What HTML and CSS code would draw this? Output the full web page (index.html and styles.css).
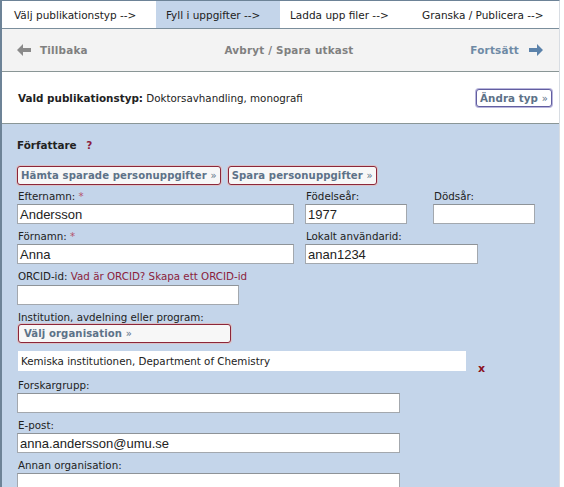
FILE: index.html
```html
<!DOCTYPE html>
<html lang="sv">
<head>
<meta charset="utf-8">
<title>Fyll i uppgifter</title>
<link rel="stylesheet" href="styles.css">
</head>
<body>
<div class="page">
  <div class="tabs">
    <div class="tab t1">Välj publikationstyp --&gt;</div>
    <div class="tab t2 active">Fyll i uppgifter --&gt;</div>
    <div class="tab t3">Ladda upp filer --&gt;</div>
    <div class="tab t4">Granska / Publicera --&gt;</div>
  </div>
  <div class="navbar">
    <div class="nav-back">
      <svg class="arrow" width="14" height="12" viewBox="0 0 14 12"><path d="M0 6 L6 0 L6 4 L14 4 L14 8 L6 8 L6 12 Z" fill="#8a8a8a"/></svg>
      <span>Tillbaka</span>
    </div>
    <div class="nav-mid">Avbryt / Spara utkast</div>
    <div class="nav-next">
      <span>Fortsätt</span>
      <svg class="arrow" width="14" height="12" viewBox="0 0 14 12"><path d="M14 6 L8 0 L8 4 L0 4 L0 8 L8 8 L8 12 Z" fill="#5b82aa"/></svg>
    </div>
  </div>
  <div class="typebar">
    <div class="typetext"><b>Vald publikationstyp:</b> Doktorsavhandling, monografi</div>
    <button class="btn btn-type">Ändra typ <span class="raq">»</span></button>
  </div>
  <div class="panel">
    <div class="heading">Författare <span class="help">?</span></div>
    <div class="btnrow">
      <button class="btn btn-red">Hämta sparade personuppgifter <span class="raq">»</span></button>
      <button class="btn btn-red">Spara personuppgifter <span class="raq">»</span></button>
    </div>
    <div class="row">
      <div class="field">
        <label>Efternamn: <span class="req">*</span></label>
        <div class="input w-name">Andersson</div>
      </div>
      <div class="field">
        <label>Födelseår:</label>
        <div class="input w-year">1977</div>
      </div>
      <div class="field f-death">
        <label>Dödsår:</label>
        <div class="input w-year"></div>
      </div>
    </div>
    <div class="row">
      <div class="field">
        <label>Förnamn: <span class="req">*</span></label>
        <div class="input w-name">Anna</div>
      </div>
      <div class="field">
        <label>Lokalt användarid:</label>
        <div class="input w-uid">anan1234</div>
      </div>
    </div>
    <div class="field">
      <label>ORCID-id: <a class="link">Vad är ORCID?</a> <a class="link">Skapa ett ORCID-id</a></label>
      <div class="input w-orcid"></div>
    </div>
    <div class="field">
      <label>Institution, avdelning eller program:</label>
      <button class="btn btn-red btn-org">Välj organisation <span class="raq">»</span></button>
    </div>
    <div class="orgrow">
      <div class="orgbox">Kemiska institutionen, Department of Chemistry</div>
      <span class="remove">x</span>
    </div>
    <div class="field">
      <label>Forskargrupp:</label>
      <div class="input w-wide"></div>
    </div>
    <div class="field">
      <label>E-post:</label>
      <div class="input w-wide">anna.andersson@umu.se</div>
    </div>
    <div class="field">
      <label>Annan organisation:</label>
      <div class="input w-wide"></div>
    </div>
  </div>
</div>
</body>
</html>
```

FILE: styles.css
```css
html, body {
  margin: 0;
  padding: 0;
  background: #ffffff;
}
body {
  font-family: "DejaVu Sans", Verdana, sans-serif;
  font-size: 10.3px;
  color: #222;
}
.page {
  width: 557px;
  border-left: 2px solid #6d8397;
  border-right: 1px solid #d8dde3;
  border-top: 1px solid #6d8397;
  box-sizing: content-box;
}
.tabs {
  display: flex;
  height: 27px;
  border-bottom: 1px solid #7b8e9c;
  font-size: 10.5px;
}
.tab {
  display: flex;
  align-items: center;
  padding-left: 12px;
  box-sizing: border-box;
  color: #222;
}
.t1 { width: 154px; }
.t2 { width: 124px; padding-left: 10px; }
.t3 { width: 128px; padding-left: 10px; }
.t4 { flex: 1; padding-left: 14px; }
.tab.active { background: #c4d5ea; }
.navbar {
  display: flex;
  align-items: center;
  height: 42px;
  background: #f3f3f3;
  border-bottom: 1px solid #8a9696;
  padding: 0 16px 0 15px;
  font-weight: bold;
  font-size: 10.4px;
  color: #808080;
  letter-spacing: 0.2px;
}
.nav-back, .nav-next {
  display: flex;
  align-items: center;
}
.nav-back { width: 158px; }
.nav-next { width: 140px; }
.nav-back span { margin-left: 9px; }
.nav-mid { flex: 1; text-align: center; }
.nav-next { justify-content: flex-end; color: #6e8aa5; }
.nav-next span { margin-right: 10px; }
.typebar {
  display: flex;
  align-items: center;
  justify-content: space-between;
  height: 51px;
  background: #fff;
  border-bottom: 1px solid #8a9696;
  padding: 0 7px 0 16px;
}
.typetext b { font-weight: bold; color: #222; font-size: 10.4px; }
.btn {
  font-family: "DejaVu Sans", Verdana, sans-serif;
  font-size: 10.1px;
  font-weight: bold;
  color: #5d7288;
  background: #f7f7f7;
  border-radius: 3px;
  padding: 0 3px;
  height: 19px;
  cursor: pointer;
  white-space: nowrap;
  letter-spacing: 0.1px;
}
.btn .raq { font-weight: normal; font-size: 10px; }
.btn-type {
  border: 1px solid #625ea0;
  box-shadow: 0 0 0 1px #b9b6dc;
  background: #fff;
  padding: 0 3px;
  margin-top: 1px;
  height: 18px;
  font-size: 10.3px;
}
.btn-red {
  border: 1px solid #8c2639;
  box-shadow: 0 0 0 1px #d8c3c9;
}
.panel {
  background: #c4d5ea;
  padding: 15px 0 20px 15px;
  min-height: 380px;
}
.heading {
  font-weight: bold;
  font-size: 10.4px;
  height: 17px;
}
.help {
  color: #8b1d3c;
  margin-left: 6px;
}
.btnrow {
  display: flex;
  gap: 7px;
  margin-top: 10px;
  margin-bottom: 5px;
}
.row {
  display: flex;
  gap: 11px;
}
.f-death { margin-left: 15px; }
.field {
  display: flex;
  flex-direction: column;
  margin-bottom: 6px;
}
label {
  display: block;
  height: 13px;
  line-height: 13px;
  padding-left: 1px;
  color: #222;
}
.req { color: #b5546b; }
.link { color: #8b1d3c; }
.input {
  height: 18px;
  border: 1px solid #a3a8ae;
  border-top-color: #8e9398;
  background: #fff;
  font-family: "Liberation Sans", Arial, sans-serif;
  font-size: 13px;
  line-height: 19px;
  padding-left: 2px;
  color: #222;
  margin-top: 1px;
  box-sizing: content-box;
}
.w-name { width: 273px; }
.w-year { width: 98px; }
.w-uid { width: 169px; }
.w-orcid { width: 218px; margin-top: 2px; }
.w-wide { width: 379px; }
.btn-org {
  width: 213px;
  text-align: left;
  margin-top: 0;
  margin-left: 1px;
  padding-left: 5px;
}
.orgrow {
  display: flex;
  align-items: flex-end;
  margin-top: 8px;
  margin-bottom: 8px;
}
.orgbox {
  width: 448px;
  height: 20px;
  line-height: 21px;
  background: #fff;
  padding-left: 3px;
  box-sizing: border-box;
  margin-left: 1px;
}
.remove {
  color: #8b1020;
  font-weight: bold;
  margin-left: 12px;
  font-size: 11px;
  line-height: 10px;
  margin-bottom: -3px;
}
```
